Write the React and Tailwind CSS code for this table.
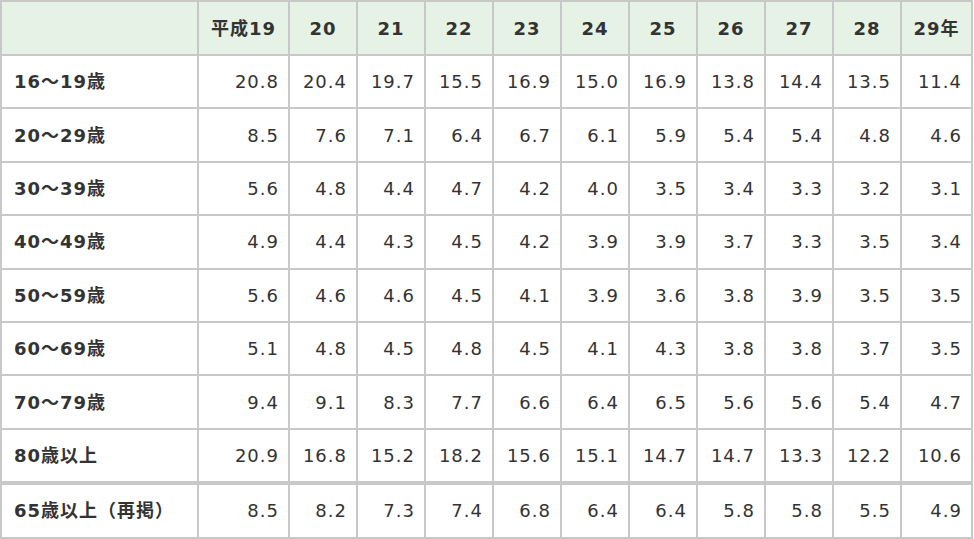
import React from "react";

const years = ["平成19", "20", "21", "22", "23", "24", "25", "26", "27", "28", "29年"];

const rows = [
  { label: "16〜19歳", values: ["20.8", "20.4", "19.7", "15.5", "16.9", "15.0", "16.9", "13.8", "14.4", "13.5", "11.4"] },
  { label: "20〜29歳", values: ["8.5", "7.6", "7.1", "6.4", "6.7", "6.1", "5.9", "5.4", "5.4", "4.8", "4.6"] },
  { label: "30〜39歳", values: ["5.6", "4.8", "4.4", "4.7", "4.2", "4.0", "3.5", "3.4", "3.3", "3.2", "3.1"] },
  { label: "40〜49歳", values: ["4.9", "4.4", "4.3", "4.5", "4.2", "3.9", "3.9", "3.7", "3.3", "3.5", "3.4"] },
  { label: "50〜59歳", values: ["5.6", "4.6", "4.6", "4.5", "4.1", "3.9", "3.6", "3.8", "3.9", "3.5", "3.5"] },
  { label: "60〜69歳", values: ["5.1", "4.8", "4.5", "4.8", "4.5", "4.1", "4.3", "3.8", "3.8", "3.7", "3.5"] },
  { label: "70〜79歳", values: ["9.4", "9.1", "8.3", "7.7", "6.6", "6.4", "6.5", "5.6", "5.6", "5.4", "4.7"] },
  { label: "80歳以上", values: ["20.9", "16.8", "15.2", "18.2", "15.6", "15.1", "14.7", "14.7", "13.3", "12.2", "10.6"] },
];

const total = { label: "65歳以上（再掲）", values: ["8.5", "8.2", "7.3", "7.4", "6.8", "6.4", "6.4", "5.8", "5.8", "5.5", "4.9"] };

const cell = "border-2 border-[#c8c8c8] align-middle";

const App = () => {
  return (
    <div className="bg-white w-[974px] h-[539px] overflow-hidden text-[#333] text-[18px] tracking-[1px] font-['DejaVu_Sans','Noto_Sans_CJK_JP',sans-serif]">
      <table className="border-collapse w-[972px] table-fixed">
        <colgroup>
          <col className="w-[197px]" />
          <col className="w-[91px]" />
          {years.slice(1, 10).map((y) => (
            <col key={y} className="w-[68px]" />
          ))}
          <col className="w-[71px]" />
        </colgroup>
        <thead>
          <tr className="h-[54px] bg-[#e5f2e5]">
            <th className={cell}></th>
            {years.map((y) => (
              <th key={y} className={`${cell} text-center font-bold`}>
                {y}
              </th>
            ))}
          </tr>
        </thead>
        <tbody>
          {rows.map((r, i) => (
            <tr key={r.label} className={i === 7 ? "h-[54px]" : "h-[53.4px]"}>
              <th className={`${cell} text-left font-bold pl-3`}>{r.label}</th>
              {r.values.map((v, j) => (
                <td key={j} className={`${cell} text-right pr-[9px]`}>
                  {v}
                </td>
              ))}
            </tr>
          ))}
          <tr className="h-[55px]">
            <th className={`${cell} border-t-4 border-t-double text-left font-bold pl-3`}>{total.label}</th>
            {total.values.map((v, j) => (
              <td key={j} className={`${cell} border-t-4 border-t-double text-right pr-[9px]`}>
                {v}
              </td>
            ))}
          </tr>
        </tbody>
      </table>
    </div>
  );
};

export default App;
